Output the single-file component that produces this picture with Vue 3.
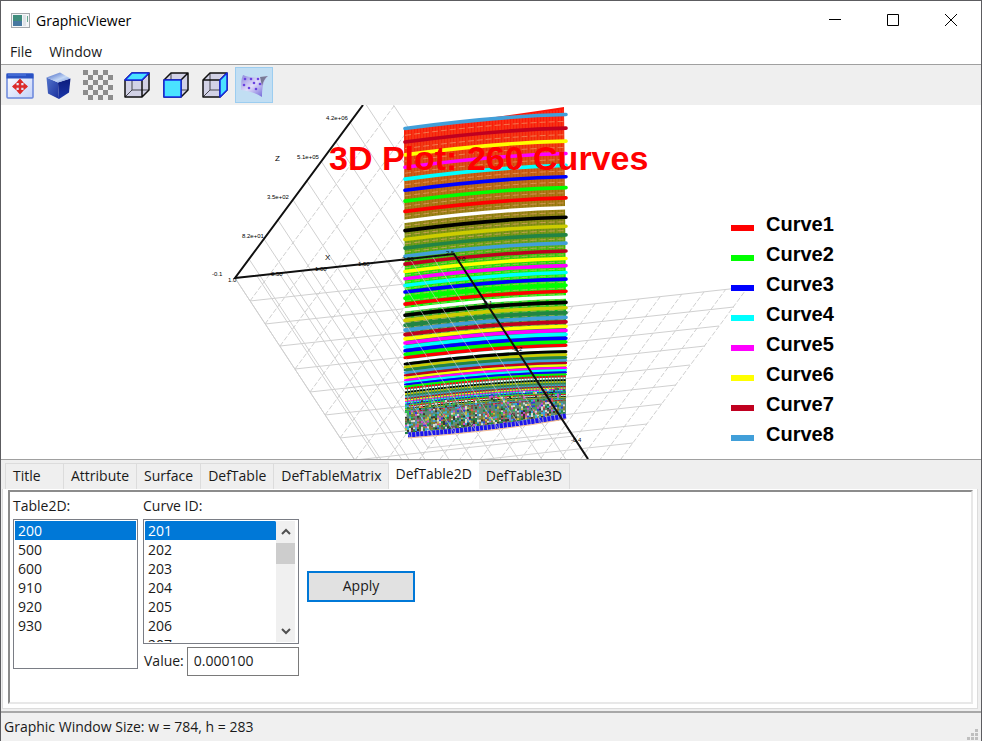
<script setup>
import { ref } from 'vue'

const tables = [200, 500, 600, 910, 920, 930]
const curveIds = Array.from({ length: 60 }, (_, i) => 201 + i)
const tabs = ['Title', 'Attribute', 'Surface', 'DefTable', 'DefTableMatrix', 'DefTable2D', 'DefTable3D']
const activeTab = ref('DefTable2D')
const table = ref(200)
const curve = ref(201)
const value = ref('0.000100')

const legend = ['#ff0000', '#00ff00', '#0000ff', '#00ffff', '#ff00ff', '#ffff00', '#c00020', '#419fd9']

// Parallel projection of the plot box: origin and the three axis vectors
const O = [235, 278]
const X = [219, -24]
const Y = [150, 228]
const Z = [144, -195]
const at = (a, b, c) => [0, 1].map((i) => O[i] + a * X[i] + b * Y[i] + c * Z[i])
const seg = (p, q) => `M${p.map(Math.round)}L${q.map(Math.round)}`
let solid = ''
let dashed = ''
let floorLines = ''
for (let i = 0; i <= 10; i++) {
  const t = i / 10
  solid += seg(at(0, t, 0), at(1, t, 0))
  floorLines += seg(at(t, 0, 0), at(t, 1, 0))
  solid += seg(at(0, 0, t), at(0, 1, t))
  solid += seg(at(0, 1, t), at(1, 1, t))
  dashed += seg(at(0, t, 0), at(0, t, 1))
  dashed += seg(at(t, 1, 0), at(t, 1, 1))
}

// The curves get closer by a constant ratio towards the floor
const cycle = ['#419fd9', '#c00020', '#ffff00', '#ff00ff', '#00ffff', '#0000ff', '#00ff00', '#ff0000', '#ffffff', '#000000', '#cccc00', '#228445']
const curvePath = (l, r) => `M405 ${l.toFixed(1)}Q495 ${((l * 0.42 + r * 0.58) - 4).toFixed(1)} 566 ${r.toFixed(1)}`
const curves = Array.from({ length: 62 }, (_, k) => {
  const f = Math.pow(0.9553, k)
  return {
    d: curvePath(431 - 302.5 * f, 419 - 304.5 * f),
    color: cycle[k % 12],
    width: Math.max(1, Math.min(3.6, 13.5 * f * 0.95)),
    dash: k > 42 ? '2 1' : undefined,
  }
})

// Surface mesh
let meshV = ''
for (let x = 407; x < 565; x += 3) {
  meshV += `M${x} ${(129 - (x - 405) * 0.125).toFixed(1)}V300`
}
let meshH = ''
for (let k = 0; k < 26; k++) {
  const f = Math.pow(0.9553, k + 0.5)
  meshH += curvePath(431 - 302.5 * f, 419 - 304.5 * f)
}

// Aliased area where the curves are closer than a pixel
let seed = 7
const rnd = () => (seed = (seed * 16807) % 2147483647) / 2147483647
const speckles = ['#e05060', '#30c050', '#3040d0', '#30b8c8', '#c850c8', '#c8b840', '#805050', '#419fd9', '#d8d8d0', '#383830', '#808030', '#228445'].map((color) => {
  let d = ''
  for (let i = 0; i < 135; i++) {
    const x = 405 + Math.floor(rnd() * 80) * 2
    const y = 433 - (x - 405) * 0.09 - Math.floor(rnd() * rnd() * 18) * 1.9
    d += `M${x} ${y.toFixed(1)}h2`
  }
  return { color, d }
})

const axisLabels = [
  [326, 120, '4.2e+06'], [297, 159, '5.1e+05'], [267, 199, '3.5e+02'], [242, 238, '8.2e+01'],
  [212, 276, '-0.1'], [228, 282, '1.0'], [271, 276, '0.50'], [315, 271, '1.00'], [358, 266, '1.50'],
  [402, 261, '2.00'], [446, 255, '2.5'], [457, 261, '0.0'], [482, 305, '-0.1'], [512, 351, '-0.2'],
  [543, 396, '-0.3'], [571, 442, '-0.4'],
]

const checks = []
for (let r = 0; r < 6; r++) for (let c = 0; c < 6; c++) if ((r + c) % 2 === 0) checks.push([c * 5, r * 5])

const cubeFaces = [
  { name: 'Top view', face: 'M2 9L9 2H26L19 9Z' },
  { name: 'Front view', face: 'M2 9H19V26H2Z' },
  { name: 'Side view', face: 'M19 9L26 2V19L19 26Z' },
]
</script>

<template>
  <div class="window">
    <header class="titlebar">
      <svg class="app-icon" viewBox="0 0 19 15" aria-hidden="true">
        <rect x=".5" y=".5" width="18" height="14" fill="#f4f6f8" stroke="#a4a8ac" />
        <rect x="2" y="2" width="9" height="11" fill="#3f8c7c" />
        <rect x="2" y="8" width="9" height="5" fill="#4678a0" />
        <rect x="12" y="2" width="3" height="11" fill="#dfe3e8" />
        <rect x="16" y="3" width="1" height="6" fill="#6aa890" />
      </svg>
      <h1>GraphicViewer</h1>
      <div class="caption-buttons">
        <button type="button" aria-label="Minimize"><svg viewBox="0 0 12 12"><path d="M0 5.500H12" /></svg></button>
        <button type="button" aria-label="Maximize"><svg viewBox="0 0 12 12"><path d="M.5 .5H11.5V11.5H.5Z" /></svg></button>
        <button type="button" aria-label="Close"><svg viewBox="0 0 12 12"><path d="M0 0L12 12M12 0L0 12" /></svg></button>
      </div>
    </header>

    <nav class="menubar">
      <button type="button">File</button>
      <button type="button">Window</button>
    </nav>

    <div class="toolbar" role="toolbar">
      <button type="button" aria-label="Fit all">
        <svg viewBox="0 0 28 28">
          <defs>
            <linearGradient id="fit" x1="0" y1="0" x2="1" y2="1"><stop offset="0" stop-color="#fff" /><stop offset="1" stop-color="#c4d2f8" /></linearGradient>
          </defs>
          <rect x="1" y="3" width="26" height="24" rx="1" fill="url(#fit)" stroke="#6a86dc" stroke-width="1.5" />
          <path d="M.5 2.5H27.5V7.5H.5Z" fill="#2a52c4" />
          <path d="M2 4H20" stroke="#5b82e6" />
          <path d="M14 9V22M7.500 15.500H20.500" stroke="#dc2a2a" stroke-width="2.500" />
          <path d="M14 7.500L18 12H10ZM14 23.500L18 19H10ZM6 15.500L10.500 11.500V19.500ZM22 15.500L17.500 11.500V19.500Z" fill="#dc2a2a" />
        </svg>
      </button>
      <button type="button" aria-label="Shaded">
        <svg viewBox="0 0 28 28">
          <defs>
            <linearGradient id="cl" x1="0" y1="0" x2="1" y2="1"><stop offset="0" stop-color="#5274cc" /><stop offset="1" stop-color="#1a2f9c" /></linearGradient>
            <linearGradient id="cr" x1="0" y1="0" x2="0" y2="1"><stop offset="0" stop-color="#0c1c7c" /><stop offset="1" stop-color="#1a35a8" /></linearGradient>
            <linearGradient id="ct" x1="0" y1="0" x2="1" y2="1"><stop offset="0" stop-color="#3c5ec0" /><stop offset=".6" stop-color="#c4d8f6" /><stop offset="1" stop-color="#6a8ad8" /></linearGradient>
          </defs>
          <path d="M1.500 6.500L13 11.500L14 28L3 22.500Z" fill="url(#cl)" />
          <path d="M13 11.500L25.500 7.500L24 21.500L14 28Z" fill="url(#cr)" />
          <path d="M1.500 6.500L15 1.500L25.500 7.500L13 11.500Z" fill="url(#ct)" />
        </svg>
      </button>
      <button type="button" aria-label="Transparency">
        <svg class="checker" viewBox="0 0 30 30">
          <rect v-for="[x, y] in checks" :key="`${x}-${y}`" :x="x" :y="y" width="5" height="5" fill="#8c8c8c" />
        </svg>
      </button>
      <button v-for="c in cubeFaces" :key="c.name" type="button" :aria-label="c.name">
        <svg viewBox="0 0 28 28" stroke-linejoin="round">
          <path d="M2 9L9 2H26V19L19 26H2Z" fill="#d2d2e6" />
          <path d="M9 2V19H26M9 19L2 26" fill="none" stroke="#44444c" />
          <path d="M2 9L9 2H26V19L19 26H2ZM2 9H19V26M19 9L26 2" fill="none" stroke="#111" stroke-width="1.500" />
          <path :d="c.face" fill="#4ae2ff" stroke="#1428e6" stroke-width="1.500" />
        </svg>
      </button>
      <button type="button" class="on" aria-label="Surface">
        <svg viewBox="0 0 28 28">
          <defs>
            <linearGradient id="sf" x1="0" y1="0" x2="1" y2="1"><stop offset="0" stop-color="#8c86dc" /><stop offset=".45" stop-color="#e0dcfa" /><stop offset="1" stop-color="#5a4ed0" /></linearGradient>
          </defs>
          <path d="M3 4C9 7 18 7 28 5C23 10 22 17 22 26C16 22 9 20 1 19C1 13 1 8 3 4Z" fill="url(#sf)" />
          <path d="M20 6L28 5C25 7 23 11 22 15Z" fill="#787a96" />
          <g fill="#6a42e0"><circle cx="5" cy="8" r="1.300" /><circle cx="11" cy="8" r="1.300" /><circle cx="18" cy="8" r="1.300" /><circle cx="4" cy="14" r="1.300" /><circle cx="9" cy="17" r="1.300" /><circle cx="14" cy="12" r="1.300" /><circle cx="20" cy="13" r="1.300" /><circle cx="16" cy="18" r="1.300" /></g>
        </svg>
      </button>
    </div>

    <main class="plot">
      <svg viewBox="1 105 980 354" preserveAspectRatio="xMidYMid meet" role="img" aria-label="3D plot">
        <defs>
          <linearGradient id="surface" gradientUnits="userSpaceOnUse" x1="480" y1="115" x2="488" y2="275">
            <stop offset="0" stop-color="#ff1408" /><stop offset=".2" stop-color="#f02a08" />
            <stop offset=".42" stop-color="#b8600c" /><stop offset=".62" stop-color="#8c7c0c" />
            <stop offset=".8" stop-color="#5c9c10" /><stop offset=".93" stop-color="#18dc08" /><stop offset="1" stop-color="#00ff00" />
          </linearGradient>
          <linearGradient id="lower" x1="0" y1="0" x2="0" y2="1">
            <stop offset="0" stop-color="#00ff00" /><stop offset=".2" stop-color="#208c40" /><stop offset="1" stop-color="#6c8c84" />
          </linearGradient>
          <clipPath id="over"><path d="M404 256H455L566 425L408 438Z" /></clipPath>
        </defs>

        <g fill="none" stroke="#d0d0d0">
          <path :d="solid + floorLines" />
          <path :d="dashed" stroke-dasharray="5 2" />
        </g>

        <path d="M404 129Q500 117 564 107L566 300L405 312Z" fill="url(#surface)" />
        <path d="M405 308L566 294V419L407 432Z" fill="url(#lower)" />
        <path :d="meshV" stroke="#f0a868" stroke-opacity=".3" />
        <path :d="meshH" fill="none" stroke="#f0a878" stroke-opacity=".6" stroke-dasharray="6 3" />
        <g fill="none" stroke-linecap="round">
          <path v-for="(c, k) in curves" :key="k" :d="c.d" :stroke="c.color" :stroke-width="c.width" :stroke-dasharray="c.dash" :stroke-linecap="c.dash ? 'butt' : 'round'" />
        </g>
        <path v-for="s in speckles" :key="s.color" :d="s.d" :stroke="s.color" stroke-width="2" />
        <path d="M408 435Q500 428 566 416" fill="none" stroke="#9c9ccc" stroke-width="5" />
        <path d="M408 435Q500 428 566 416" fill="none" stroke="#1c14f0" stroke-width="5" stroke-dasharray="3 1" />
        <path d="M408 438Q500 431 566 419" fill="none" stroke="#f0b890" />
        <path :d="floorLines" clip-path="url(#over)" fill="none" stroke="#d0d0d0" stroke-opacity=".6" />

        <path d="M363 105L235 278L454 254L588 459" fill="none" stroke="#101010" stroke-width="2" />
        <g class="tick">
          <text v-for="[x, y, t] in axisLabels" :key="`${x}-${y}`" :x="x" :y="y">{{ t }}</text>
        </g>
        <g class="axis-name">
          <text x="275" y="161">Z</text>
          <text x="325" y="260">X</text>
        </g>

        <text class="plot-title" x="329" y="170">3D Plot: 260 Curves</text>
        <g v-for="(color, i) in legend" :key="color">
          <rect x="731" :y="225 + i * 30" width="23" height="6" :fill="color" />
          <text class="legend" x="766" :y="231 + i * 30">Curve{{ i + 1 }}</text>
        </g>
      </svg>
    </main>

    <section class="panel">
      <div class="tabs" role="tablist">
        <button v-for="t in tabs" :key="t" type="button" role="tab" :aria-selected="t === activeTab" @click="activeTab = t">{{ t }}</button>
      </div>
      <div class="page">
        <form class="sheet" @submit.prevent>
          <div class="field">
            <label for="table2d">Table2D:</label>
            <select id="table2d" v-model="table" class="list table-list" size="6">
              <option v-for="t in tables" :key="t" :value="t">{{ t }}</option>
            </select>
          </div>
          <div class="field">
            <label for="curve">Curve ID:</label>
            <div class="list scroll-list">
              <select id="curve" v-model="curve" size="6">
                <option v-for="c in curveIds" :key="c" :value="c">{{ c }}</option>
              </select>
              <div class="scrollbar">
                <button type="button" aria-label="Scroll up"><svg viewBox="0 0 10 8"><path d="M1 6L5 2L9 6" /></svg></button>
                <span class="thumb"></span>
                <button type="button" aria-label="Scroll down"><svg viewBox="0 0 10 8"><path d="M1 2L5 6L9 2" /></svg></button>
              </div>
            </div>
            <div class="value-row">
              <label for="value">Value:</label>
              <input id="value" v-model="value" type="text">
            </div>
          </div>
          <button type="submit" class="apply">Apply</button>
        </form>
      </div>
    </section>

    <footer class="status">
      <span>Graphic Window Size: w = 784, h = 283</span>
      <svg viewBox="0 0 12 12" aria-hidden="true">
        <path d="M8 0h3v3h-3zM4 4h3v3h-3zM8 4h3v3h-3zM0 8h3v3h-3zM4 8h3v3h-3zM8 8h3v3h-3z" fill="#bfbfbf" />
      </svg>
    </footer>
  </div>
</template>

<style>
body { margin: 0; background: #fff; }
</style>

<style scoped>
.window {
  box-sizing: border-box;
  min-height: 100vh;
  display: flex;
  flex-direction: column;
  border: 1px solid #5c5c60;
  background: #fff;
  color: #1a1a1a;
  font: 14px/19px "Open Sans", "Noto Sans", sans-serif;
}
button, input, select { font: inherit; color: inherit; }
button { padding: 0; border: 0; background: none; }
svg { display: block; }

.titlebar { display: flex; align-items: center; height: 38px; padding: 0 1px 0 10px; }
.app-icon { width: 19px; height: 15px; }
h1 { margin: 0 0 0 6px; font-size: 14px; font-weight: 400; color: #000; }
.caption-buttons { display: flex; margin-left: auto; }
.caption-buttons button { display: grid; place-items: center; width: 58px; height: 38px; }
.caption-buttons svg { width: 12px; height: 12px; fill: none; stroke: #000; overflow: visible; }

.menubar { display: flex; gap: 17px; height: 25px; padding-left: 9px; border-bottom: 1px solid #a0a0a0; }

.toolbar { display: flex; gap: 1px; padding: 2px 0; background: #efefef; }
.toolbar button { box-sizing: border-box; display: grid; place-items: center; width: 38px; height: 36px; border: 1px solid transparent; }
.toolbar .on { border-color: #9ccdf0; background: #c1def3; }
.toolbar svg { width: 28px; height: 28px; }
.toolbar .checker { width: 30px; height: 30px; }

.plot { flex: 1; display: flex; min-height: 240px; }
.plot > svg { flex: 1; min-width: 0; width: 100%; }
.plot-title { font: bold 34px "Liberation Sans", Arial, sans-serif; fill: #f00; }
.legend { font: bold 20px "Liberation Sans", Arial, sans-serif; fill: #000; }
.tick { font: 6px "Liberation Sans", Arial, sans-serif; fill: #000; }
.axis-name { font: 8px "Liberation Sans", Arial, sans-serif; fill: #000; }

.panel { border-top: 1px solid #a0a0a0; border-bottom: 2px solid #a8a8a8; background: #efefef; }
.tabs { display: flex; align-items: flex-end; height: 29px; padding-left: 4px; }
.tabs button {
  box-sizing: border-box;
  min-width: 59px;
  height: 26px;
  padding: 0 7px 2px;
  border: 1px solid #dcdcdc;
  border-left-width: 0;
  border-bottom-width: 0;
  text-align: left;
}
.tabs button:first-child { border-left-width: 1px; }
.tabs button[aria-selected="true"] { height: 28px; padding: 0 6px 4px; border-color: #fff; background: #fff; }
.page { margin: 0 3px 2px 1px; padding: 1px 4px 4px 5px; border: 1px solid #dcdcdc; border-top: 0; background: #fff; }
.sheet {
  display: flex;
  gap: 5px;
  padding: 5px 4px 26px 3px;
  border: 2px solid #8c8c8c;
  border-right-color: #e8e8e8;
  border-bottom-color: #e8e8e8;
}
.field { display: flex; flex-direction: column; gap: 3px; }
.field label { height: 19px; line-height: 17px; }
.list { box-sizing: border-box; border: 1px solid #7a7d85; border-radius: 0; background: #fff; padding: 1px; }
select { margin: 0; padding: 0; outline: 0; overflow-y: auto; scrollbar-width: none; background: #fff; }
.table-list { width: 125px; height: 150px; }
.scroll-list { display: flex; width: 156px; height: 125px; padding-right: 3px; }
.scroll-list select { flex: 1; min-width: 0; height: 121px; border: 0; }
option { min-height: 19px; padding: 0 3px; line-height: 19px; }
option:checked {
  background: #0078d7 linear-gradient(#0078d7, #0078d7);
  color: #fff;
  -webkit-text-fill-color: #fff;
}
.scrollbar { display: flex; flex-direction: column; width: 19px; background: #f0f0f0; }
.scrollbar button { display: grid; place-items: center; height: 22px; }
.scrollbar button:last-child { margin-top: auto; }
.scrollbar svg { width: 10px; height: 8px; fill: none; stroke: #505050; stroke-width: 2; }
.thumb { height: 21px; background: #cdcdcd; }
.value-row { display: flex; align-items: center; gap: 3px; padding-left: 1px; }
.value-row input { box-sizing: border-box; flex: 1; min-width: 0; width: 0; height: 29px; padding: 0 6px 2px; border: 1px solid #7a7a7a; background: #fff; }
.apply { align-self: center; margin-left: 3px; width: 108px; height: 31px; padding-bottom: 2px; border: 2px solid #0078d7; background: #e1e1e1; }

.status { display: flex; align-items: center; justify-content: space-between; height: 29px; padding: 0 0 0 3px; background: #f0f0f0; }
.status span { padding-bottom: 3px; }
.status svg { align-self: flex-end; width: 12px; height: 12px; margin: 0 2px 1px 0; }
</style>
